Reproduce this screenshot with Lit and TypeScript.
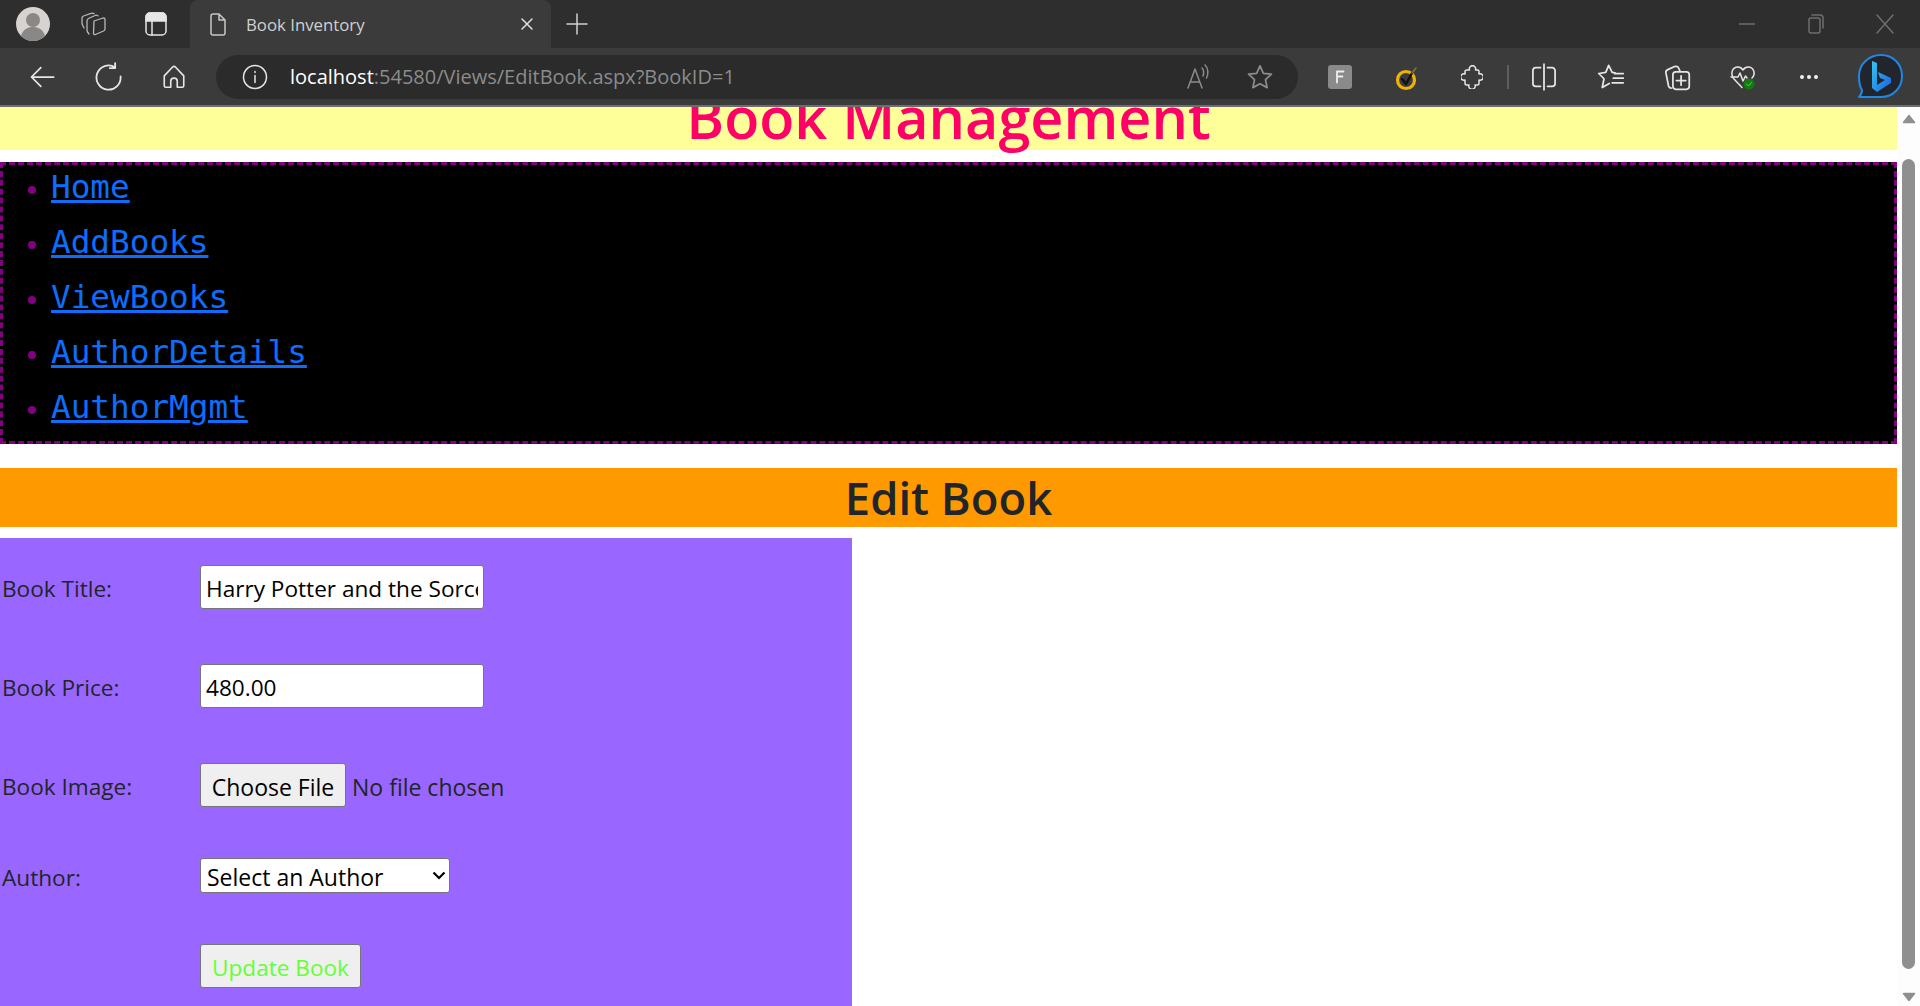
import {LitElement, css, html, svg} from 'lit';
import {customElement} from 'lit/decorators.js';

const links = ['Home', 'AddBooks', 'ViewBooks', 'AuthorDetails', 'AuthorMgmt'];

@customElement('app-root')
export class AppRoot extends LitElement {
  static styles = css`
    :host {
      display: flex;
      flex-direction: column;
      width: 1920px;
      height: 1006px;
      overflow: hidden;
      background: #fff;
      font-family: 'Open Sans', 'Liberation Sans', sans-serif;
      color: #212529;
    }

    /* browser chrome */
    .tabstrip {
      display: flex;
      align-items: center;
      height: 48px;
      padding-left: 2px;
      background: #2e2e2e;
    }
    .slot {
      display: flex;
      flex: none;
      align-items: center;
      justify-content: center;
      width: 62px;
    }
    .slot .stack {
      margin-right: 4px;
    }
    .slot .panel {
      margin-right: 2px;
    }
    .tab {
      display: flex;
      align-items: center;
      width: 361px;
      height: 48px;
      margin-left: 2px;
      border-radius: 8px 8px 0 0;
      background: #3b3b3b;
      color: #d0d0d0;
      font-size: 16.8px;
    }
    .tab .page {
      margin: 0 18px 0 18px;
    }
    .tab .title {
      flex: 1;
    }
    .tab .close {
      margin-right: 16px;
    }
    .plus {
      width: 52px;
    }
    .spacer {
      flex: 1;
    }
    .win {
      display: flex;
      justify-content: center;
      width: 69px;
    }
    .win.last {
      margin-right: 1px;
    }
    .toolbar {
      display: flex;
      align-items: center;
      height: 57px;
      padding-left: 9px;
      border-bottom: 2px solid #6e6e6e;
      background: #3b3b3b;
    }
    .tool {
      display: flex;
      flex: none;
      align-items: center;
      justify-content: center;
      width: 66px;
    }
    .pill {
      display: flex;
      align-items: center;
      width: 1082px;
      height: 44px;
      margin: 0 9px;
      border-radius: 22px;
      background: #2b2b2b;
      color: #8c8c8c;
      font-size: 20px;
    }
    .pill .info {
      margin: 0 22px 0 26px;
    }
    .pill .url {
      flex: 1;
      white-space: nowrap;
    }
    .pill .host {
      color: #fff;
    }
    .pill .read {
      margin-right: -5px;
    }
    .pill .star {
      margin-right: 5px;
    }
    .sep {
      flex: none;
      width: 2px;
      height: 24px;
      margin: 0 2px;
      background: #5e5e5e;
    }
    .fav {
      margin-left: 1px;
    }
    .bing {
      width: 76px;
    }

    /* page */
    .viewport {
      display: flex;
      flex: 1;
      min-height: 0;
    }
    .page-body {
      flex: 1;
      min-width: 0;
      overflow: hidden;
    }
    .banner {
      display: flex;
      justify-content: center;
      height: 43px;
      margin-bottom: 12px;
      background: #ffff99;
      color: #ff0066;
      font-size: 57.5px;
      font-weight: 600;
      line-height: 43px;
    }
    .banner span {
      margin-top: -11px;
    }
    nav {
      height: 282px;
      box-sizing: border-box;
      border: 3px dashed #800080;
      background: #000;
    }
    nav ul {
      margin: -5px 0 0;
      padding: 0 0 0 48px;
      font-family: 'DejaVu Sans Mono', monospace;
      font-size: 32.7px;
      line-height: 55px;
      color: #800080;
    }
    nav li::marker {
      font-size: 26px;
    }
    nav a {
      color: #0d6efd;
      text-decoration-thickness: 3px;
    }
    h1 {
      height: 59px;
      margin: 24px 0 11px;
      background: #ff9900;
      font-size: 45.4px;
      font-weight: 600;
      line-height: 59px;
      text-align: center;
    }
    form {
      width: 852px;
      height: 468px;
      box-sizing: border-box;
      padding-top: 27px;
      background: #9966ff;
      font-size: 22.6px;
    }
    .row {
      display: grid;
      grid-template-columns: 200px auto;
      align-items: center;
      justify-items: start;
      padding-bottom: 51px;
    }
    .row.text {
      padding-bottom: 55px;
    }
    .row label {
      padding: 3px 0 0 2px;
    }
    input,
    select,
    button {
      box-sizing: border-box;
      font: inherit;
    }
    input[type='text'] {
      width: 284px;
      height: 44px;
      padding: 3px 5px 0;
      border: 1px solid #767676;
      border-radius: 3px;
      color: #000;
    }
    input[type='file'] {
      height: 44px;
      color: #212529;
      font-size: 23px;
    }
    input[type='file']::file-selector-button {
      height: 44px;
      width: 146px;
      margin-right: 6px;
      padding: 3px 0 0;
      border: 1px solid #767676;
      border-radius: 3px;
      background: #efefef;
      color: #000;
      font: inherit;
    }
    select {
      width: 250px;
      height: 35px;
      padding: 2px 0 0 6px;
      border: 1px solid #767676;
      border-radius: 3px;
      color: #000;
      font-size: 23px;
      appearance: none;
      background: #fff
        url("data:image/svg+xml,%3Csvg xmlns='http://www.w3.org/2000/svg' width='14' height='9' viewBox='0 0 14 9'%3E%3Cpath d='M1.500 1.500L7 7l5.500-5.500' fill='none' stroke='%23000' stroke-width='2.200'/%3E%3C/svg%3E")
        no-repeat right 3px center;
    }
    button {
      width: 161px;
      height: 44px;
      padding: 3px 0 0;
      border: 1px solid #767676;
      border-radius: 3px;
      background: #efefef;
      color: #66ff33;
    }

    /* scrollbar */
    .scrollbar {
      display: flex;
      flex: none;
      flex-direction: column;
      align-items: center;
      width: 23px;
      padding: 7px 0 4px;
      box-sizing: border-box;
      background: #fdfdfd;
    }
    .thumb {
      flex: 1;
      width: 13px;
      margin: 35px 0 23px;
      border-radius: 7px;
      background: #8f8f8f;
    }
    .scrollbar svg {
      flex: none;
      fill: #8f8f8f;
      stroke: #8f8f8f;
    }

    svg {
      display: block;
      fill: none;
      stroke: #e6e6e6;
      stroke-width: 1.5;
      stroke-linecap: round;
      stroke-linejoin: round;
    }
    svg.dim {
      stroke: #8c8c8c;
    }
    svg.plain {
      stroke: none;
    }
    svg.win-icon {
      stroke: #6e6e6e;
    }
  `;

  private icon(size: number, body: unknown, cls = '') {
    return html`<svg class=${cls} width=${size} height=${size} viewBox="0 0 24 24">${body}</svg>`;
  }

  render() {
    return html`
      <div class="tabstrip">
        <div class="slot">
          <svg class="plain" width="34" height="34" viewBox="0 0 34 34">
            <circle cx="17" cy="17" r="17" fill="#d6d3d0"></circle>
            <circle cx="17" cy="13" r="7" fill="#8a8886"></circle>
            <path d="M5 29c2-7 7-9 12-9s10 2 12 9a17 17 0 0 1-24 0z" fill="#8a8886"></path>
          </svg>
        </div>
        <div class="slot">
          <svg class="stack" width="25" height="24" viewBox="0 0 25 24">
            <g stroke="#b8b8b8" stroke-width="1.300">
              <path d="M13 9l9-3c1 0 2 0 2 1v10c0 1-.5 1.500-1.500 2l-8 3.500c-1 .4-2 0-2-1z"></path>
              <path d="M8 22l-1.500-2C6 19 6 18 6 17V9c0-1 .5-2 1.500-2.500L14 3.500c1-.5 2-.3 3 .3"></path>
              <path d="M3 16l-1-2c-.5-1-1-2-1-3V6c0-1 .5-1.500 1.500-2L10 1.300c1-.4 2-.3 3 .3"></path>
            </g>
          </svg>
        </div>
        <div class="slot">
          <svg class="panel" width="22" height="24" viewBox="0 0 22 24">
            <rect x="1" y="1" width="20" height="22" rx="4"></rect>
            <path d="M1 5a4 4 0 0 1 4-4h12a4 4 0 0 1 4 4v4H1z" fill="#e6e6e6"></path>
            <path d="M7 9v14"></path>
          </svg>
        </div>
        <div class="tab">
          <svg class="page" width="20" height="24" viewBox="0 0 20 24">
            <path d="M3 4a2 2 0 0 1 2-2h6l6 6v13a2 2 0 0 1-2 2H5a2 2 0 0 1-2-2zM11 2v6h6" stroke="#c8c8c8"></path>
          </svg>
          <span class="title">Book Inventory</span>
          <svg class="close" width="16" height="16" viewBox="0 0 16 16">
            <path d="M3 3l10 10M13 3L3 13" stroke="#e0e0e0"></path>
          </svg>
        </div>
        <div class="slot plus">
          <svg width="22" height="22" viewBox="0 0 22 22"><path d="M11 1v20M1 11h20" stroke="#d0d0d0"></path></svg>
        </div>
        <div class="spacer"></div>
        <div class="win">
          <svg class="win-icon" width="16" height="16" viewBox="0 0 16 16"><path d="M0 8h16"></path></svg>
        </div>
        <div class="win">
          <svg class="win-icon" width="16" height="22" viewBox="0 0 16 22">
            <rect x="1" y="5" width="11" height="15" rx="2"></rect>
            <path d="M4 2h8a3 3 0 0 1 3 3v10"></path>
          </svg>
        </div>
        <div class="win last">
          <svg class="win-icon" width="18" height="22" viewBox="0 0 18 22"><path d="M1 2l16 18M17 2L1 20"></path></svg>
        </div>
      </div>

      <div class="toolbar">
        <div class="tool">
          ${this.icon(28, svg`<path d="M22 12H3M11 4l-8 8 8 8"></path>`)}
        </div>
        <div class="tool">
          ${this.icon(29, svg`<path d="M17.500 4.500A10 10 0 1 0 22 12M17.500 1v4H13"></path>`)}
        </div>
        <div class="tool">
          ${this.icon(26, svg`<path d="M3 11l7.500-8c.8-.8 2.200-.8 3 0l7.500 8v9a1.500 1.500 0 0 1-1.500 1.500H15V16a3 3 0 0 0-6 0v5.500H4.500A1.500 1.500 0 0 1 3 20z"></path>`)}
        </div>
        <div class="pill">
          <svg class="info" width="26" height="26" viewBox="0 0 26 26">
            <circle cx="13" cy="13" r="11.500"></circle>
            <path d="M13 11.500v7M13 7.500v1"></path>
          </svg>
          <span class="url"><span class="host">localhost</span>:54580/Views/EditBook.aspx?BookID=1</span>
          <div class="tool read">
            <svg class="dim" width="28" height="28" viewBox="0 0 28 28">
              <path d="M3 25L10 6l7 19M5.500 19h9M17 5c2 2 2 5 1 8M20 2c3.500 3 3.500 9 1.500 13"></path>
            </svg>
          </div>
          <div class="tool star">
            ${this.icon(28, svg`<path d="M12 2.500l2.900 6.300 6.900.8-5.100 4.700 1.400 6.800L12 17.700l-6.100 3.400 1.400-6.800L2.200 9.600l6.900-.8z"></path>`, 'dim')}
          </div>
        </div>
        <div class="tool">
          <svg class="plain" width="24" height="24" viewBox="0 0 24 24">
            <rect width="24" height="24" rx="3" fill="#8a8a8a"></rect>
            <path d="M9 6.500h6.500M9 6.500v11M9 11.500h5.500" stroke="#eee" stroke-width="1.800"></path>
          </svg>
        </div>
        <div class="tool">
          <svg width="28" height="28" viewBox="0 0 28 28">
            <circle cx="14" cy="17" r="8.500" stroke="#f0b400" stroke-width="3.200"></circle>
            <path d="M10 16l4 5 6-11" stroke="#111" stroke-width="2.500"></path>
            <path d="M20 10l4-5" stroke="#8a7434" stroke-width="1.500"></path>
          </svg>
        </div>
        <div class="tool">
          <svg width="22" height="24" viewBox="0 0 22 24">
            <path d="M4 6.500A1.500 1.500 0 0 1 5.500 5H8.500a3.200 3.200 0 1 1 6 0H16.500A1.500 1.500 0 0 1 18 6.500V9a3.200 3.200 0 1 1 0 6v3.500a1.500 1.500 0 0 1-1.500 1.500H14a3.200 3.200 0 1 1-6 0H5.500A1.500 1.500 0 0 1 4 18.500V15a3.200 3.200 0 1 1 0-6z"></path>
          </svg>
        </div>
        <div class="sep"></div>
        <div class="tool">
          ${this.icon(28, svg`<path d="M12 1v22M9 4H5a2.500 2.500 0 0 0-2.500 2.500v11A2.500 2.500 0 0 0 5 20h4M15 4h4a2.500 2.500 0 0 1 2.500 2.500v11A2.500 2.500 0 0 1 19 20h-4"></path>`)}
        </div>
        <div class="tool fav">
          ${this.icon(28, svg`<path d="M15.500 8.500L13 8 10 2 7.500 8 1.500 9l4.500 4.500L4.500 21l6-3.500M15 9h7.500M14 13h8.500M13 17h9.500"></path>`)}
        </div>
        <div class="tool">
          ${this.icon(28, svg`<path d="M7 21.500c-1.500 0-2-1-2.300-2L2.500 8.500c-.2-1.500 .5-2.500 2-3L10 3c1.500-.3 3 .3 3.500 1.500L14.500 7"></path><rect x="8.500" y="7.500" width="14" height="15" rx="2.500"></rect><path d="M15.500 11v8M11.500 15h8"></path>`)}
        </div>
        <div class="tool">
          <svg width="28" height="28" viewBox="0 0 28 28">
            <path d="M13 24.500L5 16C1 11 3 4 9 4c2.500 0 4 1.500 5 3 1-1.500 2.500-3 5-3 6 0 8 7 4 11"></path>
            <path d="M2 14h7l2-4 3 8 2.500-5 1.500 2"></path>
            <circle cx="20" cy="21" r="5.500" fill="#107c10" stroke="none"></circle>
            <path d="M17.500 21l2 2 3-3.500" stroke="#6fbf6f" stroke-width="1"></path>
          </svg>
        </div>
        <div class="tool">
          <svg class="plain" width="20" height="6" viewBox="0 0 20 6">
            <circle cx="3" cy="3" r="2" fill="#f0f0f0"></circle>
            <circle cx="10" cy="3" r="2" fill="#f0f0f0"></circle>
            <circle cx="17" cy="3" r="2" fill="#f0f0f0"></circle>
          </svg>
        </div>
        <div class="tool bing">
          <svg width="46" height="46" viewBox="0 0 46 46">
            <defs>
              <linearGradient id="bg" x1="0" y1="0" x2="1" y2="1">
                <stop offset="0" stop-color="#36c6f0"></stop>
                <stop offset="1" stop-color="#1b5fe0"></stop>
              </linearGradient>
            </defs>
            <path d="M24 1c12 0 21 9 21 21s-9 21-21 21H2c2-2 3-4 3-7C2 32 2 27 2 22 2 10 12 1 24 1z" fill="#22252b" stroke="#1e88e5" stroke-width="2"></path>
            <path d="M15 7l5 2v22l8-5-5-2-2-6 13 6v5L20 38l-5-4z" fill="url(#bg)" stroke="none"></path>
          </svg>
        </div>
      </div>

      <div class="viewport">
        <div class="page-body">
          <div class="banner"><span>Book Management</span></div>
          <nav>
            <ul>
              ${links.map((l) => html`<li><a href="#">${l}</a></li>`)}
            </ul>
          </nav>
          <h1>Edit Book</h1>
          <form @submit=${(e: Event) => e.preventDefault()}>
            <div class="row text">
              <label>Book Title:</label>
              <input type="text" value="Harry Potter and the Sorcerer's Stone" />
            </div>
            <div class="row text">
              <label>Book Price:</label>
              <input type="text" value="480.00" />
            </div>
            <div class="row">
              <label>Book Image:</label>
              <input type="file" />
            </div>
            <div class="row">
              <label>Author:</label>
              <select><option>Select an Author</option></select>
            </div>
            <div class="row">
              <span></span>
              <button>Update Book</button>
            </div>
          </form>
        </div>
        <div class="scrollbar">
          <svg width="14" height="10" viewBox="0 0 14 10"><path d="M7 1.500L1.500 8.500h11z"></path></svg>
          <div class="thumb"></div>
          <svg width="14" height="10" viewBox="0 0 14 10"><path d="M7 8.500L1.500 1.500h11z"></path></svg>
        </div>
      </div>
    `;
  }
}
